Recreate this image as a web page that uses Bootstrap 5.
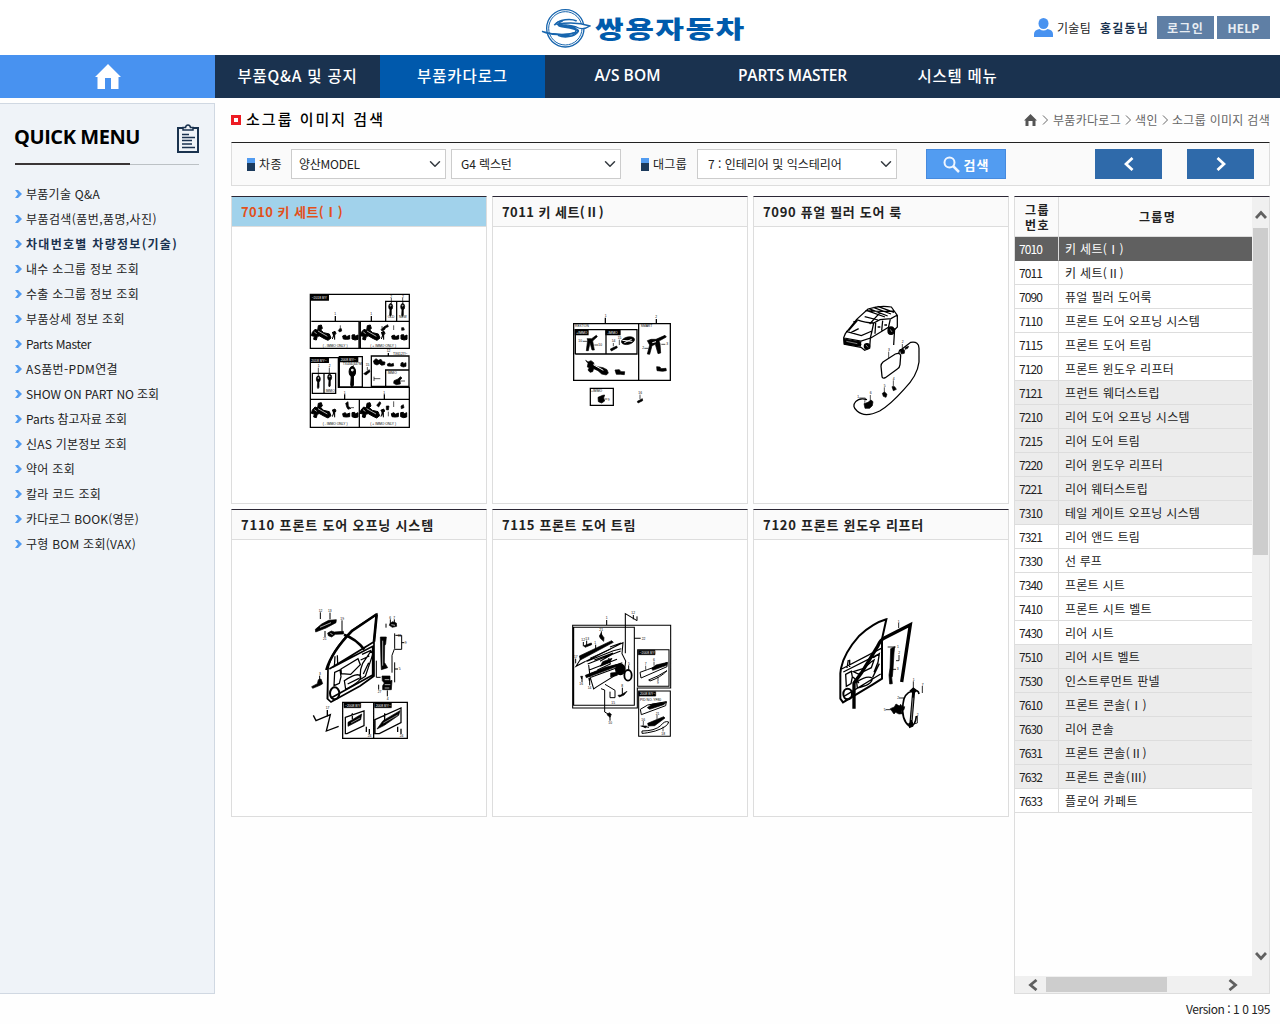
<!DOCTYPE html>
<html lang="ko">
<head>
<meta charset="utf-8">
<meta name="viewport" content="width=device-width, initial-scale=1">
<title>소그룹 이미지 검색</title>
<link href="https://cdn.jsdelivr.net/npm/bootstrap@5.3.0/dist/css/bootstrap.min.css" rel="stylesheet">
<style>
body{font-family:"Noto Sans CJK KR","Liberation Sans",sans-serif;font-size:12px;line-height:18px;color:#222;background:#fefefe;width:1280px;height:1024px;overflow:hidden}
[data-w]{display:inline-block;white-space:nowrap}
.topbar{height:55px;background:#fff;padding-left:541px;padding-right:10px}
.brand-name{font-size:24px;font-weight:900;color:#005bac;line-height:36px;margin-left:4px;transform:scaleX(1.3);transform-origin:left}
.user-name{color:#1a324f;margin:0 8px 0 9px}
.btn-top{background:#5f7fa5;color:#e8edf3;font-size:12px;font-weight:700;border-radius:0;height:23px;width:57px;padding:0;line-height:22px;border:0}
.btn-help{width:53px;margin-left:3px}
.gnb{height:43px;background:#1a324f}
.gnb a{width:165px;color:#fff;text-decoration:none;font-size:15.5px;font-weight:500;line-height:41px;text-align:center}
.gnb a.home{width:215px;background:#4892f0}
.gnb a.active{background:#0059ac}
.gnb a.en{font-family:"Open Sans","Noto Sans CJK KR",sans-serif;font-weight:600}
.side{width:215px;height:891px;margin-top:5px;background:#eff3f8;border:1px solid #d0d8e2;border-left:0}
.side-head{padding:20px 15px 0 14px;height:59px}
.side-head h2{font:700 20px/26px "Open Sans",sans-serif;color:#000}
.side-rule{height:2px;margin:0 15px;background:linear-gradient(#3a3536,#3a3536) left/115px 2px no-repeat,linear-gradient(#bcc1c5,#bcc1c5) right/84px 1px no-repeat}
.side-list{padding:16px 0 0 15px}
.side-list a{height:25px;color:#222;text-decoration:none}
.side-list svg{margin-right:4px}
.side-list a.on{font-weight:700;color:#1a324f}
.content-area{padding-left:16px;padding-right:10px}
.page-head{height:44px}
.page-head h1{font-size:15px;font-weight:500;line-height:34px;color:#000}
.page-head h1 svg{margin:13px 5px 0 0}
.crumb{color:#666;height:36px}
.searchbar{height:44px;background:#fafafa;border:1px solid #ddd;border-top-color:#222;padding:0 15px}
.chip{width:8px;height:13px;background:linear-gradient(#529cf1 5px,#1b3a5c 5px);margin-right:4px}
.chip-2{margin-left:20px}
.searchbar .form-select{height:30px;border-radius:0;border-color:#ccc;font-size:12px;color:#222;padding:0 24px 0 7px;background-position:right 4px center;background-size:12px 12px;line-height:28px}
.searchbar .sel-a{width:155px;margin-left:9px;letter-spacing:-.25px}
.searchbar .sel-b{width:170px;margin-left:5px;padding-left:9px;letter-spacing:-.1px}
.searchbar .sel-c{width:200px;margin-left:10px;padding-left:10px}
.btn-search{width:80px;height:30px;border-radius:0;background:#529cf1;border:1px solid #468ade;color:#fff;font-size:13px;font-weight:700;padding:0;margin-left:29px;line-height:1}
.btn-step{width:67px;height:30px;border-radius:0;background:#2f6aaa;padding:0;border:0}
.btn-next{margin-left:25px}
.tiles{display:grid;grid-template-columns:repeat(3,256px);gap:5px;align-content:start;margin-top:10px}
.tile{height:308px;border:1px solid #ddd;border-top-color:#2b2735;background:#fff}
.tile-title{height:30px;padding-left:9px;background:#fafafa;border-bottom:1px solid #ddd;font-size:13px;font-weight:700;line-height:30px}
.tile.on .tile-title{background:#a1d2eb;color:#e2501b}
.tile svg{display:block;width:254px;height:276px;fill:none;stroke:#000;stroke-width:3.8}
.tile svg text{font:10px "Liberation Sans",sans-serif;fill:#000;stroke:none}
.tile svg .inv{fill:#fff}
.tile svg .b{fill:#000;stroke:#000}
.groups{width:256px;height:798px;margin:10px 0 0 5px;border:1px solid #ddd;border-top-color:#2b2735;background:#f0f0f0}
.group-view{width:237px;height:779px;background:#fefefe}
.group-table{margin:0;font-size:12px;width:237px;table-layout:fixed;border-collapse:separate;border-spacing:0}
.group-table th,.group-table td{border:0;border-bottom:1px solid #ddd;background:#fff;color:#222;padding:1px 0 0 6px;height:24px;line-height:22px;white-space:nowrap}
.group-table th:first-child,.group-table td:first-child{width:44px;border-right:1px solid #ddd}
.group-table td:first-child{padding-left:4px;letter-spacing:-.95px}
.group-table thead th{height:40px;background:#fafafa;text-align:center;line-height:15px;padding:0 0 0 4px;font-weight:700;vertical-align:middle}
.group-table thead th:first-child{padding-left:2px}
.group-table .alt td{background:#ececec}
.group-table .sel td{background:#606060;color:#fff;border-bottom-color:#606060}
.vbar{width:17px;padding:13px 0 15px}
.vthumb{width:15px;height:327px;background:#cdcdcd;margin-top:9px}
.hbar{height:17px;padding:0 31px 0 13px}
.hthumb{width:121px;height:15px;background:#cdcdcd;margin-left:8px}
.version{line-height:30px;text-align:right}
</style>
</head>
<body>
<header class="topbar d-flex align-items-center">
  <svg width="50" height="40" viewBox="0 0 150 120" fill="none" stroke="#1765ae" class="flex-shrink-0">
    <circle cx="73" cy="61" r="56" stroke-width="4"/><circle cx="73" cy="61" r="50" stroke-width="3"/>
    <path d="M40 52C54 33 90 31 107 39M51 82C70 90 99 87 110 72" stroke-width="5"/>
    <path d="M3 70Q55 86 104 74Q122 68 101 60L60 52Q32 44 65 39Q34 54 72 58Q105 62 112 71Q98 88 48 80Q21 78 3 70ZM147 54Q102 39 46 49Q80 48 106 57Q126 68 147 54Z" fill="#fff" stroke-width="4"/>
    <path d="M61 53Q116 56 102 73Q79 85 35 77" stroke-width="4"/>
  </svg>
  <span class="brand-name" data-w="149">쌍용자동차</span>
  <div class="d-flex align-items-center ms-auto">
    <svg width="19" height="19" viewBox="0 0 19 19" fill="#4892f0" class="me-1"><ellipse cx="9.5" cy="5.5" rx="5" ry="5.5"/><path d="M0 19v-3Q0 12 5.500 11Q9.500 14 13.500 11Q19 12 19 16v3z"/></svg>
    <span data-w="34">기술팀</span><b class="user-name" data-w="49">홍길동님</b>
    <button class="btn btn-top"><span data-w="37">로그인</span></button>
    <button class="btn btn-top btn-help"><span data-w="32">HELP</span></button>
  </div>
</header>
<nav class="gnb d-flex">
  <a href="#" class="home d-flex align-items-center justify-content-center" aria-label="홈"><svg width="26" height="26" viewBox="0 0 26 26" fill="#fff"><path d="M13 0L26 13H23.500V25H16V14H10V25H2.500V13H0z"/></svg></a>
  <a href="#"><span data-w="120">부품Q&amp;A 및 공지</span></a>
  <a href="#" class="active"><span data-w="91">부품카다로그</span></a>
  <a href="#" class="en"><span data-w="66">A/S BOM</span></a>
  <a href="#" class="en"><span data-w="109">PARTS MASTER</span></a>
  <a href="#"><span data-w="80">시스템 메뉴</span></a>
</nav>
<div class="d-flex">
  <aside class="side flex-shrink-0">
    <div class="side-head d-flex justify-content-between">
      <h2 class="m-0"><span data-w="126">QUICK MENU</span></h2>
      <svg width="22" height="29" viewBox="0 0 22 29" fill="none" stroke="#1a324f" stroke-width="2"><path d="M6 4H1v24h20V4h-5"/><path d="M6 6V3.500h2.500Q9 1 11 1t2.500 2.500H16V6z" stroke-width="1.500"/><path d="M5 10.500h7M5 13.500h13M5 16.500h10M5 20h10M5 23.500h13" stroke-width="1.500"/></svg>
    </div>
    <div class="side-rule"></div>
    <div class="side-list d-flex flex-column"></div>
  </aside>
  <main class="content-area flex-grow-1">
    <div class="page-head d-flex justify-content-between pt-1">
      <h1 class="m-0 d-flex"><svg width="10" height="10" viewBox="0 0 10 10"><path d="M1.500 1.500h7v7h-7z" fill="#fff" stroke="#ed1c24" stroke-width="3"/></svg><span data-w="139">소그룹 이미지 검색</span></h1>
      <div class="crumb d-flex align-items-center">
        <svg width="13" height="12" viewBox="0 0 13 12" fill="#555"><path d="M6.500 0L13 6.500H11.500V12H8.500V7H4.500V12H1.500V6.500H0z"/></svg>
        <svg width="16" height="10" viewBox="0 0 16 10" fill="none" stroke="#666"><path d="M6 .5L10.500 5L6 9.500"/></svg><span data-w="68">부품카다로그</span>
        <svg width="14" height="10" viewBox="0 0 14 10" fill="none" stroke="#666"><path d="M5 .5L9.500 5L5 9.500"/></svg><span data-w="23">색인</span>
        <svg width="14" height="10" viewBox="0 0 14 10" fill="none" stroke="#666"><path d="M5 .5L9.500 5L5 9.500"/></svg><span data-w="98">소그룹 이미지 검색</span>
      </div>
    </div>
    <div class="searchbar d-flex align-items-center">
      <i class="chip"></i><span data-w="23">차종</span>
      <select class="form-select sel-a"><option>양산MODEL</option></select>
      <select class="form-select sel-b"><option>G4 렉스턴</option></select>
      <i class="chip chip-2"></i><span data-w="34">대그룹</span>
      <select class="form-select sel-c"><option>7 : 인테리어 및 익스테리어</option></select>
      <button class="btn btn-search d-flex align-items-center justify-content-center"><svg width="17" height="17" viewBox="0 0 17 17" fill="none" stroke="#f0f6ff" stroke-width="2"><circle cx="6.500" cy="6.500" r="5"/><path d="M10 10l6 6" stroke-width="2.500"/></svg><span data-w="26" class="ms-1">검색</span></button>
      <button class="btn btn-step ms-auto d-flex align-items-center justify-content-center" aria-label="이전"><svg width="10" height="14" viewBox="0 0 10 14" fill="none" stroke="#fff" stroke-width="2.800"><path d="M8.500 1L2 7l6.500 6"/></svg></button>
      <button class="btn btn-step btn-next d-flex align-items-center justify-content-center" aria-label="다음"><svg width="10" height="14" viewBox="0 0 10 14" fill="none" stroke="#fff" stroke-width="2.800"><path d="M1.500 1L8 7l-6.500 6"/></svg></button>
    </div>
    <div class="d-flex">
      <section class="tiles">
        <article class="tile on"><div class="tile-title"><span data-w="102">7010 키 세트(Ⅰ)</span></div>
          <svg viewBox="-204 -174 762 828">
            <defs>
              <g id="lockset" class="b" stroke-width="3"><path d="M3 26l8-9 8 3 2-14 9-2 3 10-5 5 9 8 17 4 5 12-9 7-11-5-14-8-7 1-3 11-8-2 2-9-9-2z"/><path d="M20 22l28 16M9 25l7 5" stroke="#fff" stroke-width="2"/><path d="M62 27l9-4 3 6-4 5v14M68 31l-5 15M94 37l8-3 4 5 9-4v11l-10 1-9-1zM122 34l8-1 2 5 8-4v13l-9 2-9-3z"/></g>
              <g id="carkey" class="b" stroke-width="2"><ellipse cx="0" cy="0" rx="6" ry="9"/><path d="M-2 8h4v17l-3 4-2-4zM-3-8l6-3"/><circle cx="0" cy="-3" r="1.500" stroke="#fff"/></g>
            </defs>
            <path d="M31 28h297v162H31zM34 109h143v79M181 188v-79h147M257 108V49h70M290 49v59M31 427V218h84v89h213v120zM37 265h70v60H37zM72 265v60M118 215h69v91h-69zM214 213h113v91H214zM257 303v-48h70M31 343h297M178 343v84M106 93v16M214 93v16M265 204v10M134 328v15M253 328v15"/>
            <path class="b" d="M32 30h53v15H32zM32 219h53v13H32zM119 215h54v15h-54z"/>
            <text x="35" y="42" class="inv">~2018 8/Y</text><text x="34" y="230" class="inv">2018 8/Y~</text><text x="122" y="227" class="inv">2008 8/Y~</text>
            <text x="128" y="241">TX434/447M</text><text x="263" y="98">OLD</text><text x="297" y="98">NEW</text><text x="279" y="211">TX6127/~</text><text x="77" y="320">IMMO</text><text x="263" y="268">IMMO</text>
            <text x="68" y="186">( - IMMO ONLY )</text><text x="211" y="186">( + IMMO ONLY )</text><text x="68" y="419">( - IMMO ONLY )</text><text x="211" y="419">( + IMMO ONLY )</text>
            <use href="#lockset" x="34" y="116"/><use href="#lockset" x="181" y="116"/><use href="#lockset" x="34" y="349"/><use href="#lockset" x="180" y="349"/>
            <use href="#carkey" x="272" y="65"/><use href="#carkey" x="308" y="65"/><use href="#carkey" x="55" y="282"/><use href="#carkey" x="89" y="277"/>
            <use href="#carkey" transform="translate(157 260) scale(1.600)"/>
            <path class="b" stroke-width="2" d="M220 228l8-7 7 5 8-3 5 7 7 1-1 8-9 2-7-5-7 4-8-3zM262 237l8-3 2 4 8-3 1 8-9 1-9-1zM303 234l6-2 2 4 7-3v11l-8 2-8-3zM282 287l12-5 7-7 5 4-6 6 1 12-12 2-8-4zM191 266l17-12 2 6-12 10zM243 134l8-8 12-7 2 6-8 3-4 7-7 3zM115 137l4-6 5 0 1 7-6 3zM305 128l6 0 2 7-8 1zM137 355l7-5 1 14 8 6-9 3-4-7zM230 361l9-11 4 4-7 12zM259 363h8l-2 12-6-1zM303 363l7-4 2 9-8 3z"/>
            <path d="M222 275v13M222 281h19M274 39v17M308 39v17M55 248v23M88 248v20M202 246v10M281 121v14M281 349v17M265 380v14M303 288h12M153 368h9M121 121v10M246 123v8" stroke-width="2"/>
            <text x="103" y="91">1</text><text x="211" y="91">1</text><text x="131" y="326">1</text><text x="250" y="326">1</text><text x="260" y="201">12</text><text x="197" y="244">15</text><text x="271" y="38">2</text><text x="306" y="38">2</text><text x="53" y="246">1</text><text x="86" y="246">2</text>
          </svg></article>
        <article class="tile"><div class="tile-title"><span data-w="102">7011 키 세트(Ⅱ)</span></div>
          <svg viewBox="-201 -249 762 828">
            <path d="M41 41h290v170H41zM236 41v170M46 133V59h185v73H46M138 59v73M91 235h69v51H91zM136 23v18M289 27v14"/>
            <path class="b" d="M46 59h38v15H46zM138 59h42v15h-42z"/>
            <text x="45" y="50">REXTON</text><text x="242" y="50">SMART</text><text x="49" y="71" class="inv">+IMMO</text><text x="142" y="71" class="inv">-IMMO</text><text x="93" y="247">+IMMO</text>
            <g class="b" stroke-width="2"><path d="M81 86l14 0 14-10 3 4-9 8-5 5 5 27-7 0-6-22-5 24h-6l4-32zM151 117l19-9 2 5-18 10zM262 92l11-4 15 0 27-12 4 5-22 12 3 8 2 28-8 2-8-28-10 4-7 26-7-1 7-27z"/><ellipse cx="204" cy="92" rx="20" ry="11" transform="rotate(-14 204 92)"/><path d="M77 151l7 5 9-4 8 6 1 8 10 4 17 3 12 6 4 10-6 6-14-3-11-10-13-6-3 9-8 2-6-7 4-7-6-2 2-11zM165 180l13-1 5 6 11 0-1 9-11-1-13 0zM290 170l10 1 3 5 15-1 1 7-11 2-17-2zM114 262l14-6 6-1-3 9 3 9-9 6-10-4zM232 274l15-8 1 6-14 7z"/></g>
            <path d="M100 164l30 17M187 91l30 3M193 98l22-10M277 98l11-3" stroke="#fff" stroke-width="3"/>
            <path d="M68 94h13M103 105h12M160 99v10M178 89v16M253 115h12M304 103h12M134 267h8M240 254v13" stroke-width="2"/>
            <text x="55" y="97">10</text><text x="115" y="107">10</text><text x="155" y="97">14</text><text x="173" y="88">15</text><text x="247" y="118">2</text><text x="319" y="106">3</text><text x="134" y="22">1</text><text x="286" y="25">2</text><text x="143" y="272">9</text><text x="235" y="253">16</text>
          </svg></article>
        <article class="tile"><div class="tile-title"><span data-w="139">7090 퓨얼 필러 도어 룩</span></div>
          <svg viewBox="-228 -204 762 828">
            <path d="M41 128L46 116L80 73L114 42Q149 30 184 36L202 61V96L190 108L173 98L121 130L119 159L104 166L93 157L43 148ZM80 74Q107 84 131 84L150 74L183 71L202 60M131 84L126 108L121 129L93 138L43 129M48 109L94 122L126 108M82 77L56 107M106 47Q149 50 192 48M119 87L150 53M137 84l-2 32M158 77l-3 30M181 72l-6 27M190 103l-7 12M109 46l56 20M117 41l56 22M130 37l53 20M143 34l49 18M104 65l40 10M42 139l52 10M64 112l22-11M72 89v-11M143 96h8M163 90h8"/>
            <path d="M42 132l50 9-1 12-48-6z" class="b"/><circle cx="111" cy="154" r="8" class="b"/><ellipse cx="183" cy="107" rx="9" ry="11" class="b"/><path d="M108 150l6 7M181 103l5 8M49 139l33 7" stroke="#fff" stroke-width="1.500"/>
            <path d="M194 100l-3 50M153 214Q153 206 159 201L196 177Q211 172 212 182L210 209Q209 218 202 222L166 248Q157 252 156 244ZM207 177q-1-14 8-14l27-21q25-4 25 18v41q-5 42-45 82-41 46-73 65-44 21-67 1-18-15-5-29 12-13 34-6"/>
            <path class="b" stroke-width="2" d="M210 166l8-5 6 5-1 9-9 2zM227 157l9-3-3 6-8 3zM102 326l12-4 9-7 6 5-2 12-8 8-14 0zM157 295l7-4 7 7-3 9-8-3zM186 275l8 0 5 8-9 4z"/>
            <path d="M217 147v15M176 170v21M190 256v19M163 277v17M121 300v19M88 309h18l-2 14" stroke-width="2"/>
            <text x="215" y="144">2</text><text x="174" y="168">3</text><text x="188" y="254">4</text><text x="161" y="275">5</text><text x="119" y="298">6</text><text x="82" y="309">1</text>
          </svg></article>
        <article class="tile"><div class="tile-title"><span data-w="193">7110 프론트 도어 오프닝 시스템</span></div>
          <svg viewBox="-204 -180 762 828">
            <path d="M84 206Q91 157 156 91L230 43L222 124L222 228L180 258L93 306L82 296ZM88 207L222 125M98 202L218 139V225L93 294M84 206l-1 91" stroke-width="5"/>
            <path d="M79 210Q95 155 157 92L231 42M132 104Q168 116 193 149M230 43l-8 82" stroke-width="8"/>
            <path d="M104 217l16-7 3 20-5 20-16 7zM123 207l51-31 7 18-29 29-28-2zM133 242q40-27 49-13 4 14-45 39zM188 190l25-37 6 8-23 68-16 10 2-31zM186 163l27-12M182 180l26-12M112 166l1 26M105 169l-2 32M190 222l16-34M143 252l34-17"/>
            <ellipse cx="104" cy="280" rx="14" ry="18" stroke-width="6"/>
            <path class="b" stroke-width="2" d="M46 88l19-16 21-11 23-2-1 9-30 16-31 12zM83 99l11-6 9 3 27-2 1 8-25 1-11 8-10-4zM35 260l17-9 3-12 8-2 5 14-8 5-22 9zM241 111l18 0-2 21-3 5-1 50 10 16-19 6-1-20zM270 70l8-5 11 4 1 10-13 3-9-6zM246 228l24 0v15l6-2-2 28-26 0 0-12 5-8-6-7z"/>
            <path d="M60 82l33-14M91 100l7 4M248 122v75M254 239h14M254 254h17M254 264h14M274 74l11 2" stroke="#fff" stroke-width="2"/>
            <path d="M284 100v45l-8 21v52M286 106h19v42h-20M305 128h8M284 187v60M284 207h10M229 182v50h13M61 37v20M90 38v20M126 61v33M75 93v18M59 227v16M271 58v13M283 58v13M258 71v12M236 254v15M262 271v18" stroke-width="3"/>
            <path d="M40 346l8 16 43-18-12 49 37-14M82 330v20" stroke-width="4"/>
            <path d="M128 307h194v108H128zM221 307v108M136 352l56-19v44l-51 24h-5zM225 359l78-35v44l-65 33h-13zM157 340v18M254 340v34M199 380v16M208 387v16M293 380v16M303 386v16"/>
            <path class="b" stroke-width="2" d="M132 309h50v14h-50zM224 309h50v14h-50zM144 367l41-25-3 17-38 20zM231 387l18-25 51-30-4 14-43 30z"/>
            <path d="M153 369l27-15M250 369l43-24" stroke="#fff" stroke-width="1.500"/>
            <text x="135" y="320" class="inv">~2008 8/Y</text><text x="227" y="320" class="inv">2008 8/Y~</text>
            <text x="56" y="35">12</text><text x="84" y="36">13</text><text x="121" y="59">19</text><text x="69" y="121">21</text><text x="57" y="225">3</text><text x="77" y="328">17</text><text x="268" y="56">6</text><text x="280" y="56">7</text><text x="293" y="110">11</text><text x="314" y="132">9</text><text x="296" y="211">5</text><text x="233" y="279">27</text><text x="260" y="299">4</text><text x="203" y="411">24</text><text x="299" y="411">24</text>
          </svg></article>
        <article class="tile"><div class="tile-title"><span data-w="134">7115 프론트 도어 트림</span></div>
          <svg viewBox="-201 -180 762 828">
            <path d="M196 160V41L231 62M38 76h294v188H232v60H38zM41 82h182v234H41zM140 60v16M233 149h94v110h-94zM236 273h95v136h-95zM222 115h20M62 177l-14 22 29-15" stroke-width="3.200"/>
            <path class="b" stroke-width="2" d="M58 168l97-46 5 5-99 53zM235 151h50v13h-50zM237 275h50v13h-50zM118 108l5-8 5 8 4 5-1 11-10-9zM72 137l22-8 1 5-20 8z"/>
            <path d="M78 184l101-51 10-5-3 33 11 22-3 25-83 52-10 7-11-37-4-35M81 184l79-32 24-6M83 192l99-39M86 211l85-33M91 221l96-33M93 232l82-30M103 180l56-21M150 141l33-12M120 184l37-21M146 174l5 18-39 18" stroke-width="3.200"/>
            <path class="b" stroke-width="2" d="M76 226l60-24 36-9 2 5-95 35z"/>
            <ellipse cx="181" cy="208" rx="14" ry="16" class="b"/><path class="b" stroke-width="2" d="M128 185l28-10-6 12-29 12zM152 219l20-2v9l-20 5zM141 344l6-6 7 5-4 9zM86 235l6 0-4 8zM62 229h6l-3 8zM174 286l8-1 19-11-9 11-14 6z"/>
            <ellipse cx="204" cy="226" rx="11" ry="16" stroke-width="5.500"/>
            <path d="M90 175l62-28M123 266l11 4v66l12 7M135 253l30 18v22h-15v-18M70 126v13M80 122v13M124 94v11M107 134v16M47 176v14M66 233v13M89 238v18M206 196v16M187 263v19M220 45v13M231 49v13M150 348v14" stroke-width="3"/>
            <path d="M240 217l22-8 59-21v12l-78 34zM266 240q29-11 55-28-19 20-51 31zM241 328l22-13 56-10-2 12-73 27zM242 378l25 4M246 393q38 0 56-16 12-16 24-11-2 14-40 27-28 7-40 7z" stroke-width="3"/>
            <path class="b" stroke-width="2" d="M275 205l13-10 35-8-3 9-42 15zM262 323l15-11 43-6-9 8-42 14zM263 370l48-20 4 4-31 23-19 1zM246 378h14l-4 6z"/>
            <path d="M257 197v12M282 185v12M294 231v12M291 345v13M309 380v14M250 363v14" stroke-width="2"/>
            <text x="239" y="162" class="inv">~2008 8/Y</text><text x="240" y="286" class="inv">2008 8/Y~</text><text x="240" y="303">PID NO. YF80</text>
            <text x="137" y="58">1</text><text x="214" y="43">12</text><text x="245" y="119">22</text><text x="118" y="93">21</text><text x="64" y="124">12</text><text x="76" y="119">13</text><text x="103" y="133">1</text><text x="42" y="174">17</text><text x="58" y="256">16</text><text x="83" y="266">14</text><text x="204" y="195">5</text><text x="184" y="262">8</text><text x="154" y="312">15</text><text x="145" y="373">10</text><text x="254" y="196">7</text><text x="279" y="184">6</text><text x="291" y="252">9</text><text x="244" y="362">16</text><text x="287" y="344">21</text><text x="304" y="405">18</text>
          </svg></article>
        <article class="tile"><div class="tile-title"><span data-w="161">7120 프론트 윈도우 리프터</span></div>
          <svg viewBox="-228 -195 762 828">
            <path d="M33 190Q42 144 88 92Q130 54 169 43L156 102V221L129 238L39 292L31 281V205Z" stroke-width="6"/>
            <path d="M72 311V234L94 204L144 122Q151 105 163 99L241 59L215 231" stroke-width="10"/>
            <path d="M35 192L158 128M40 201l109-55M42 274l110-67M47 208l17-9 3 17-4 20-14 8zM70 200l31-10 23-20 8-5-8 23-39 19zM80 231q33-22 47-11 0 20-45 29zM130 158l18-12-4 26-12 30M148 176l-20 41M59 164v22M55 165l-4 24M69 216l18 18M131 143l-21 34" stroke-width="4"/>
            <ellipse cx="53" cy="267" rx="13" ry="16" stroke-width="6"/>
            <path class="b" stroke-width="2" d="M182 131l12-6-2 19-3 49-2 22-2 1 2 20-8 1-2-27 3-21zM181 311l12-5 5-9 10 6 4-5 5 8 7-1-2 9-8 4 3 8-10 1-10-5-5 5-5-7z"/>
            <path d="M251 259l-9 104" stroke-width="9"/><path d="M247 258q-26 7-28 39-6 49 20 67 17 1 20-31M251 258q14-4 16 9" stroke-width="5"/><path d="M249 278l-5 67" stroke="#fff" stroke-width="1.500"/><path d="M241 257l9-8 9 7-8 9zM237 356l10-4 1 11-9 4z" class="b"/>
            <path d="M206 54v15M173 126h24M207 150v17h-9M184 193h14M250 229v22M277 243v21M207 279h17M167 314h16M262 333v21l-7 2" stroke-width="2.500"/>
            <text x="203" y="53">1</text><text x="201" y="129">1</text><text x="205" y="147">2</text><text x="200" y="196">3</text><text x="248" y="228">1</text><text x="275" y="243">7</text><text x="202" y="281">2</text><text x="161" y="317">5</text><text x="260" y="333">2</text>
          </svg></article>
      </section>
      <section class="groups flex-shrink-0">
        <div class="d-flex">
          <div class="group-view"><table class="table group-table"><thead><tr><th><span data-w="25">그룹</span><br><span data-w="25">번호</span></th><th><span data-w="37">그룹명</span></th></tr></thead><tbody></tbody></table></div>
          <div class="vbar d-flex flex-column align-items-center">
            <svg width="12" height="9" viewBox="0 0 12 9" fill="none" stroke="#606060" stroke-width="2.800"><path d="M1 8l5-5.500L11 8"/></svg>
            <div class="vthumb"></div>
            <svg width="12" height="9" viewBox="0 0 12 9" fill="none" stroke="#606060" stroke-width="2.800" class="mt-auto"><path d="M1 1l5 5.500L11 1"/></svg>
          </div>
        </div>
        <div class="hbar d-flex align-items-center">
          <svg width="10" height="12" viewBox="0 0 10 12" fill="none" stroke="#606060" stroke-width="2.800"><path d="M8.500 1L2.500 6l6 5"/></svg>
          <div class="hthumb"></div>
          <svg width="10" height="12" viewBox="0 0 10 12" fill="none" stroke="#606060" stroke-width="2.800" class="ms-auto"><path d="M1.500 1l6 5-6 5"/></svg>
        </div>
      </section>
    </div>
    <div class="version"><span data-w="84">Version : 1 0 195</span></div>
  </main>
</div>
<script src="https://cdn.jsdelivr.net/npm/bootstrap@5.3.0/dist/js/bootstrap.bundle.min.js"></script>
<script>
// Quick menu entries: label and text width in px
const menu = [["부품기술 Q&A",74],["부품검색(품번,품명,사진)",131],["차대번호별 차량정보(기술)",152],["내수 소그룹 정보 조회",113],["수출 소그룹 정보 조회",113],["부품상세 정보 조회",99],["Parts Master",65],["AS품번-PDM연결",92],["SHOW ON PART NO 조회",133],["Parts 참고자료 조회",101],["신AS 기본정보 조회",101],["약어 조회",49],["칼라 코드 조회",75],["카다로그 BOOK(영문)",113],["구형 BOM 조회(VAX)",110]];
document.querySelector(".side-list").innerHTML = menu.map(([t, w], i) => `<a href="#" class="d-flex align-items-center${i === 2 ? " on" : ""}"><svg width="7" height="8" viewBox="0 0 7 8" fill="#529cf1"><path d="M0 0h3l4 4-4 4H0l3-4z"/></svg><span data-w="${w}">${t.replace("&", "&amp;")}</span></a>`).join("");
// Group rows: number, name, text width in px, row state
const groups = [[7010,"키 세트(Ⅰ)",59,"sel"],[7011,"키 세트(Ⅱ)",59],[7090,"퓨얼 필러 도어룩",87],[7110,"프론트 도어 오프닝 시스템",135],[7115,"프론트 도어 트림",87],[7120,"프론트 윈도우 리프터",109],[7121,"프런트 웨더스트립",95,"alt"],[7210,"리어 도어 오프닝 시스템",125,"alt"],[7215,"리어 도어 트림",75,"alt"],[7220,"리어 윈도우 리프터",98,"alt"],[7221,"리어 웨터스트립",83,"alt"],[7310,"테일 게이트 오프닝 시스템",135,"alt"],[7321,"리어 앤드 트림",75],[7330,"선 루프",37],[7340,"프론트 시트",60],[7410,"프론트 시트 벨트",87],[7430,"리어 시트",49],[7510,"리어 시트 벨트",75,"alt"],[7530,"인스트루먼트 판넬",95,"alt"],[7610,"프론트 콘솔(Ⅰ)",82,"alt"],[7630,"리어 콘솔",49,"alt"],[7631,"프론트 콘솔(Ⅱ)",82,"alt"],[7632,"프론트 콘솔(Ⅲ)",82,"alt"],[7633,"플로어 카페트",73]];
document.querySelector(".group-table tbody").innerHTML = groups.map(([n, t, w, c]) => `<tr class="${c || ""}"><td>${n}</td><td><span data-w="${w}">${t}</span></td></tr>`).join("");
document.querySelectorAll("[data-w]").forEach(e => {
  e.style.letterSpacing = "0px";
  e.style.letterSpacing = ((e.dataset.w - e.getBoundingClientRect().width) / e.textContent.length).toFixed(3) + "px";
});
</script>
</body>
</html>
